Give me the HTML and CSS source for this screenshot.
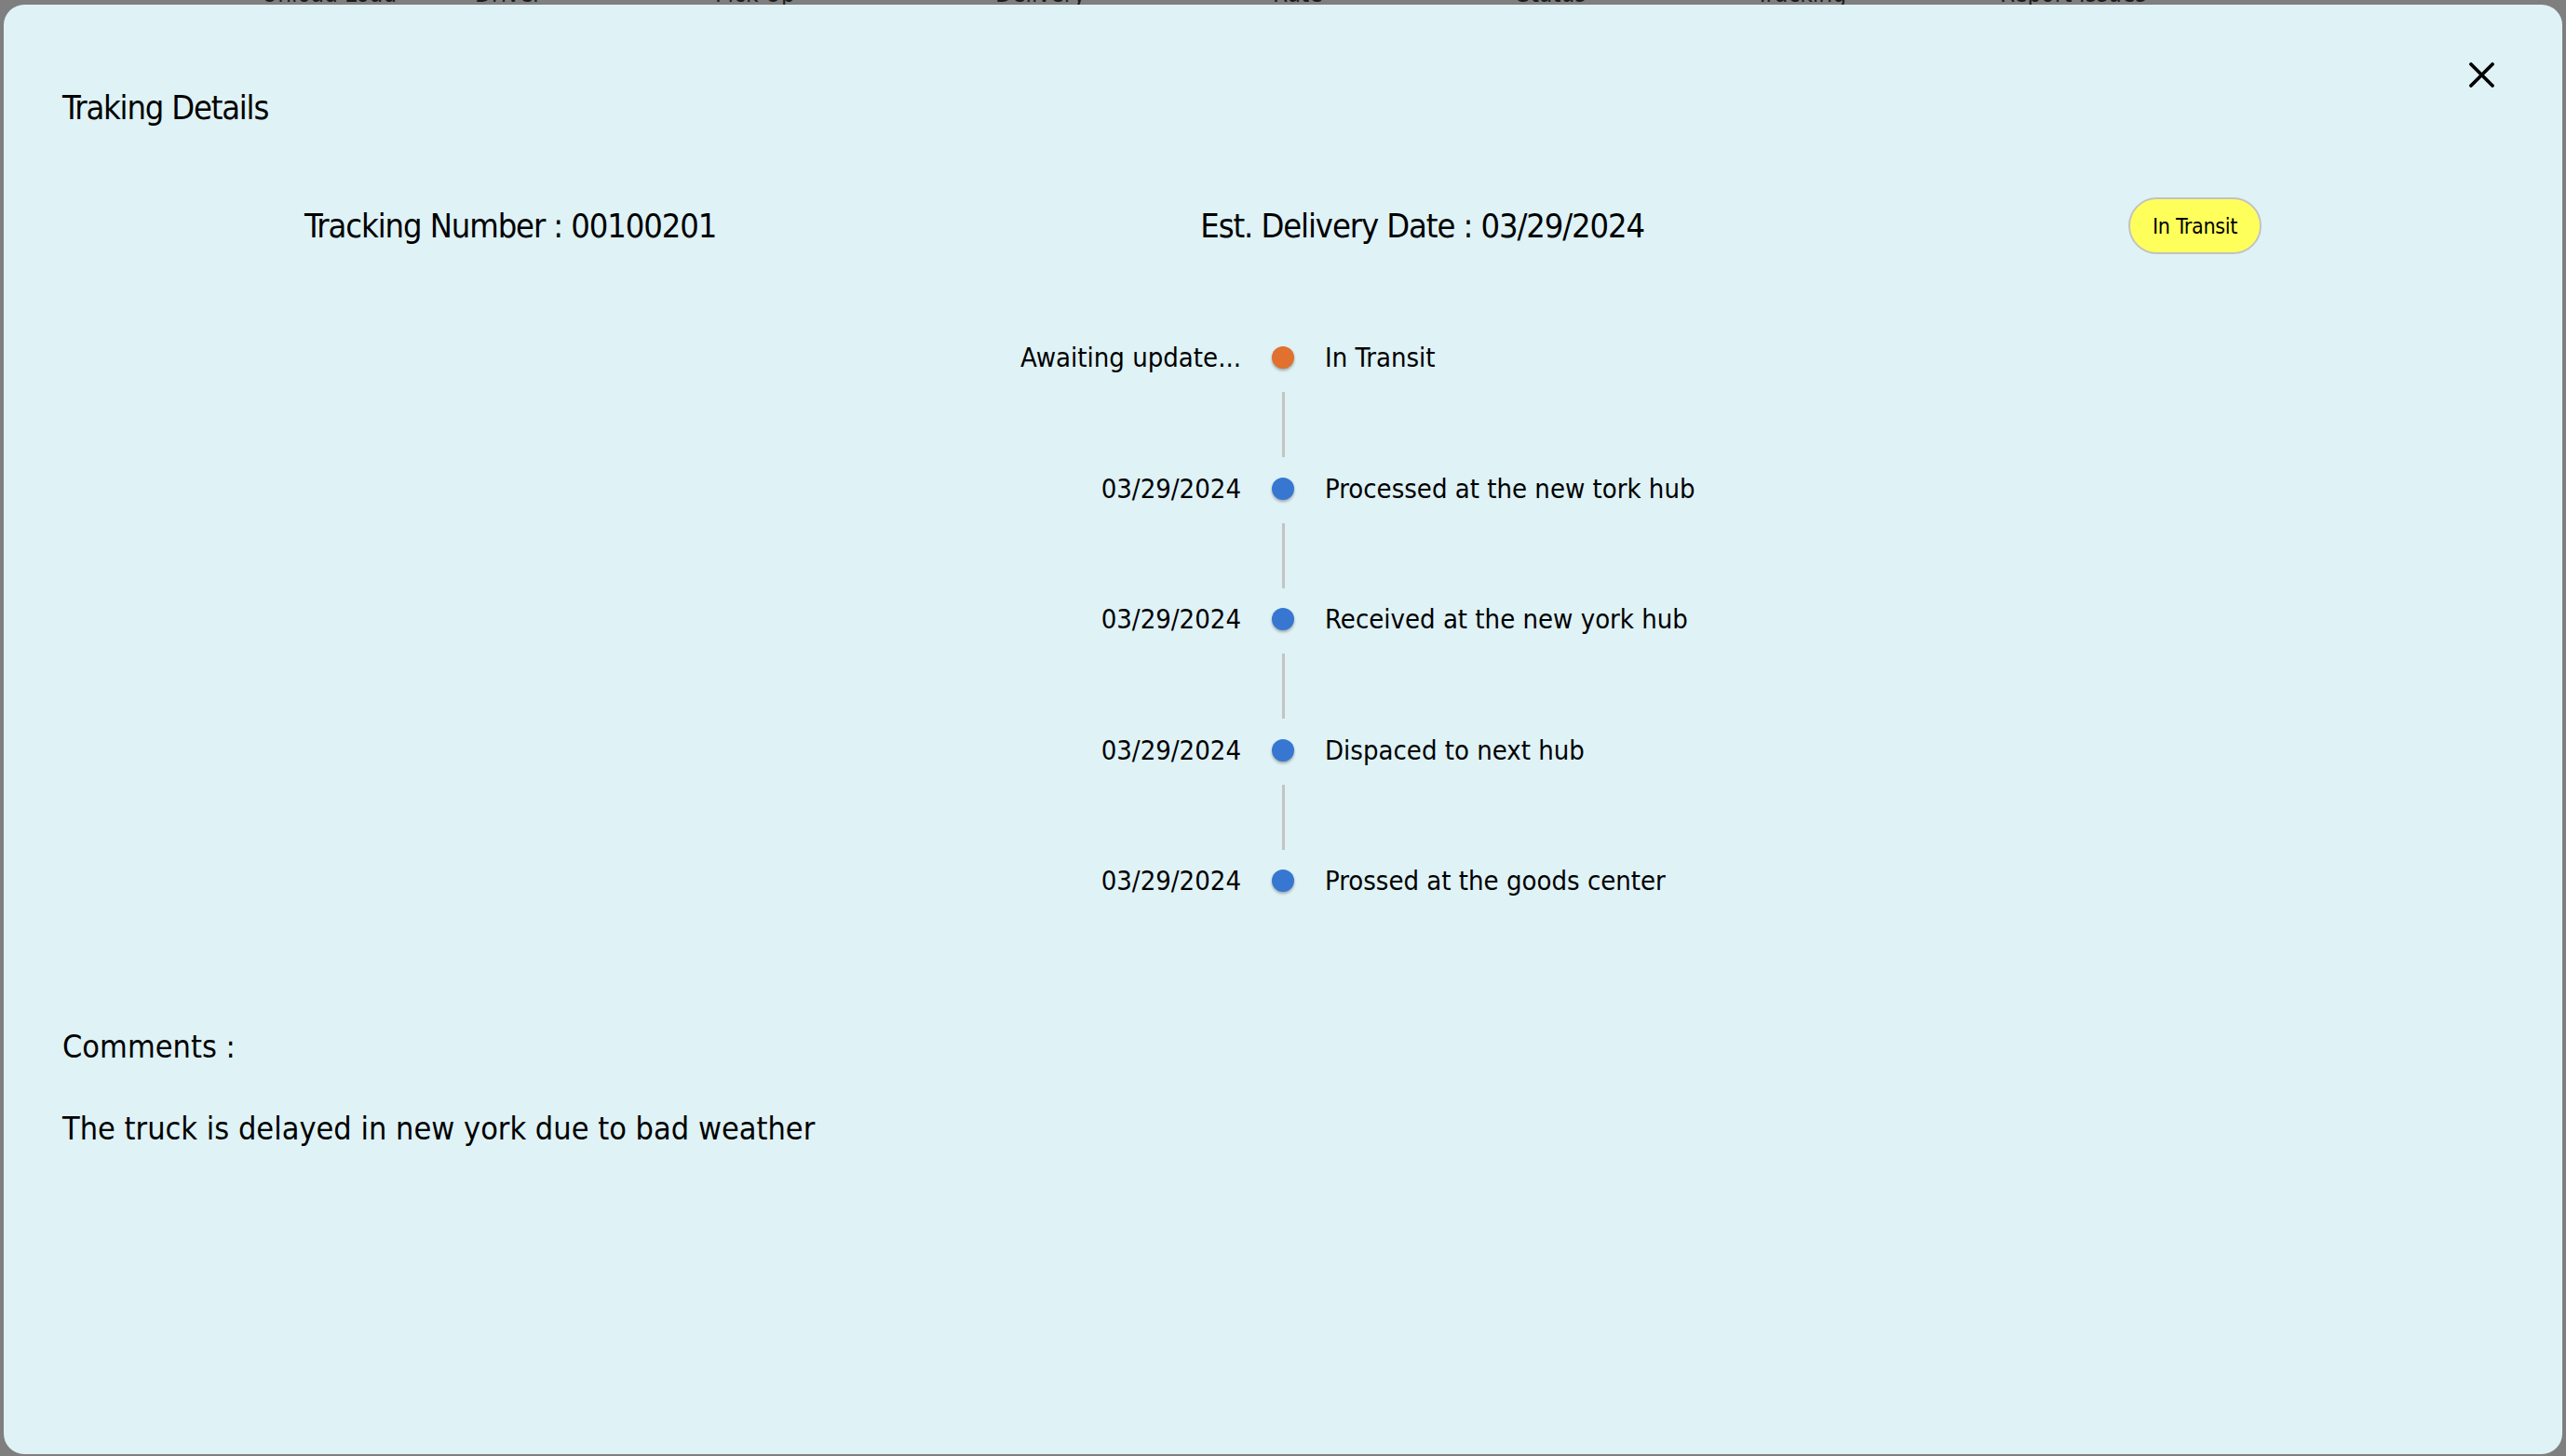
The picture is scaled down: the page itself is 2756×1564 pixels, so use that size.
FILE: index.html
```html
<!DOCTYPE html>
<html lang="en">
<head>
<meta charset="utf-8">
<title>Traking Details</title>
<link rel="stylesheet" href="styles.css">
</head>
<body>
<div class="backdrop-table">
  <div class="bt-head">
    <span>Unload</span><span>Load</span><span>Driver</span><span>Pick Up</span><span>Delivery</span><span>Rate</span><span>Status</span><span>Tracking</span><span>Report Issues</span>
  </div>
</div>

<div class="modal">
  <button class="close-btn" aria-label="Close">
    <svg width="27" height="27" viewBox="0 0 27 27"><path d="M2 2 L25 25 M25 2 L2 25" stroke="#000" stroke-width="3.8" stroke-linecap="round" fill="none"/></svg>
  </button>

  <h2 class="title">Traking Details</h2>

  <div class="summary">
    <div class="summary-item">Tracking Number : 00100201</div>
    <div class="summary-item">Est. Delivery Date : 03/29/2024</div>
    <div class="badge">In Transit</div>
  </div>

  <div class="timeline">
    <div class="tl-row">
      <div class="tl-date">Awaiting update...</div>
      <div class="tl-dot orange"></div>
      <div class="tl-text">In Transit</div>
    </div>
    <div class="tl-line"></div>
    <div class="tl-row">
      <div class="tl-date">03/29/2024</div>
      <div class="tl-dot"></div>
      <div class="tl-text">Processed at the new tork hub</div>
    </div>
    <div class="tl-line"></div>
    <div class="tl-row">
      <div class="tl-date">03/29/2024</div>
      <div class="tl-dot"></div>
      <div class="tl-text">Received at the new york hub</div>
    </div>
    <div class="tl-line"></div>
    <div class="tl-row">
      <div class="tl-date">03/29/2024</div>
      <div class="tl-dot"></div>
      <div class="tl-text">Dispaced to next hub</div>
    </div>
    <div class="tl-line"></div>
    <div class="tl-row">
      <div class="tl-date">03/29/2024</div>
      <div class="tl-dot"></div>
      <div class="tl-text">Prossed at the goods center</div>
    </div>
  </div>

  <div class="comments-label">Comments :</div>
  <div class="comments-text">The truck is delayed in new york due to bad weather</div>
</div>
</body>
</html>
```

FILE: styles.css
```css
html, body {
  margin: 0;
  padding: 0;
  height: 100%;
}
body {
  background: #7f7f7f;
  font-family: "DejaVu Sans Condensed", "Liberation Sans", sans-serif;
  color: #000;
  overflow: hidden;
  position: relative;
}

.backdrop-table {
  height: 40px;
  overflow: hidden;
}
.bt-head {
  display: grid;
  grid-template-columns: 89px 140px 258px 301px 298px 262px 257px 262px auto;
  padding-left: 281px;
  margin-top: -22px;
  font-size: 26px;
  line-height: 30px;
  color: #1c1c1c;
}

.modal {
  position: absolute;
  left: 4px;
  right: 4px;
  top: 5px;
  bottom: 2px;
  background: #dff2f6;
  border-radius: 22px;
  padding: 87px 63px 0 63px;
  box-sizing: border-box;
}

.close-btn {
  position: absolute;
  top: 62px;
  right: 73px;
  width: 27px;
  height: 27px;
  padding: 0;
  border: 0;
  background: none;
  display: block;
}
.close-btn svg { display: block; }

.title {
  margin: 0;
  font-weight: normal;
  font-size: 36px;
  letter-spacing: -1.2px;
  line-height: 48px;
}

.summary {
  margin-top: 72px;
  display: flex;
  justify-content: space-around;
  align-items: center;
  height: 61px;
}
.summary-item {
  font-size: 36px;
  letter-spacing: -1.1px;
  line-height: 50px;
}
.badge {
  box-sizing: border-box;
  width: 143px;
  height: 61px;
  border: 2px solid #c2c2c2;
  border-radius: 31px;
  background: #ffff5c;
  font-size: 23px;
  letter-spacing: -0.3px;
  display: flex;
  align-items: center;
  justify-content: center;
}

.timeline {
  margin-top: 89px;
  display: flex;
  flex-direction: column;
}
.tl-row {
  display: grid;
  grid-template-columns: 1fr 24px 1fr;
  column-gap: 33px;
  align-items: center;
  height: 44px;
  font-size: 29px;
}
.tl-date { text-align: right; }
.tl-dot {
  width: 24px;
  height: 24px;
  border-radius: 50%;
  background: #3777d2;
  box-shadow: 0 2px 3px rgba(0, 0, 0, 0.3);
}
.tl-dot.orange { background: #e0712e; }
.tl-line {
  align-self: center;
  width: 3px;
  height: 70px;
  background: #c4c4c4;
  margin: 15px 0 11.5px;
}

.comments-label {
  margin-top: 131px;
  font-size: 34px;
  line-height: 50px;
}
.comments-text {
  margin-top: 38px;
  font-size: 34px;
  line-height: 50px;
}
```
